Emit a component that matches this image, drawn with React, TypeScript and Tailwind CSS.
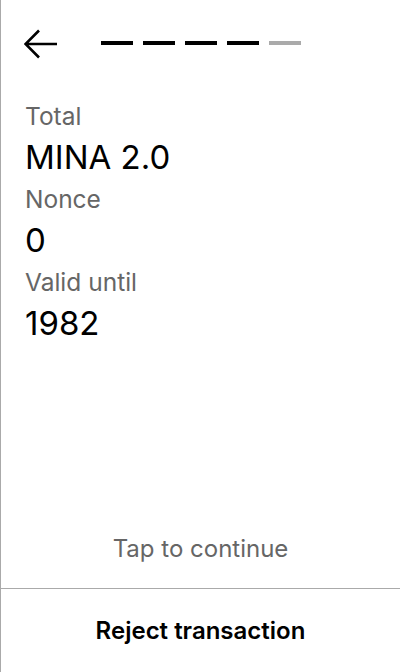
const steps = [true, true, true, true, false]

const rows = [
  { label: "Total", value: "MINA 2.0" },
  { label: "Nonce", value: "0" },
  { label: "Valid until", value: "1982" },
]

function BackArrow() {
  return (
    <svg width="34" height="30" viewBox="0 0 34 30" fill="none">
      <path
        d="M1.5 15H33M15 1.5L1.5 15L15 28.5"
        stroke="black"
        strokeWidth="2.6"
        strokeLinecap="butt"
        strokeLinejoin="miter"
      />
    </svg>
  )
}

export default function App() {
  return (
    <div className="flex h-[672px] w-[400px] flex-col border-l border-[#aaaaaa] bg-white font-['Inter',sans-serif] text-black">
      <div className="flex h-[86px] items-center pl-[23px]">
        <button className="flex items-center pt-[1px]">
          <BackArrow />
        </button>
        <div className="ml-[43px] flex gap-[10px]">
          {steps.map((done, i) => (
            <div
              key={i}
              className={`h-1 w-8 ${done ? "bg-black" : "bg-[#aaaaaa]"}`}
            />
          ))}
        </div>
      </div>

      <div className="flex flex-col px-6 pt-[15px]">
        {rows.map((row) => (
          <div key={row.label} className="flex flex-col">
            <span className="text-[24.5px] leading-[30px] text-[#666666]">
              {row.label}
            </span>
            <span className="text-[33px] leading-[53px]">{row.value}</span>
          </div>
        ))}
      </div>

      <div className="mt-auto flex flex-col">
        <p className="pb-[24px] text-center text-[24px] leading-[30px] text-[#666666]">
          Tap to continue
        </p>
        <button className="flex h-[84px] items-center justify-center border-t border-[#aaaaaa] text-[24px] font-semibold">
          Reject transaction
        </button>
      </div>
    </div>
  )
}
